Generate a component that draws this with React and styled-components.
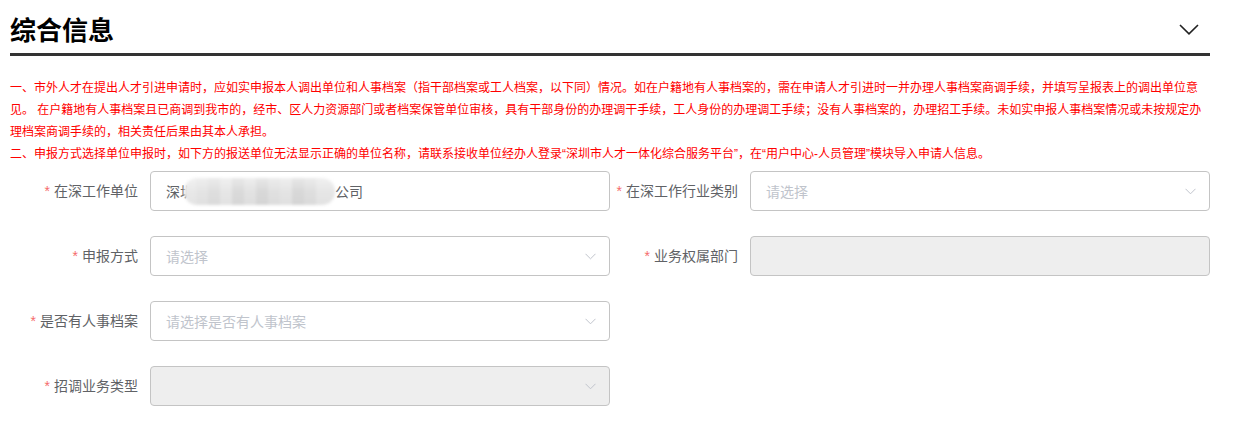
import React from "react";
import styled, { createGlobalStyle } from "styled-components";

const GlobalStyle = createGlobalStyle`
  html, body { margin: 0; padding: 0; background: #fff; }
  body { font-family: "Liberation Sans", "Noto Sans CJK SC", sans-serif; }
  * { box-sizing: border-box; }
`;

const Page = styled.div`
  width: 1200px;
  margin-left: 10px;
`;

const Header = styled.div`
  height: 56px;
  padding-top: 5px;
  display: flex;
  align-items: center;
  justify-content: space-between;
  border-bottom: 3px solid #333;
`;

const Title = styled.h2`
  margin: 0;
  font-family: "Noto Sans CJK SC", sans-serif;
  font-size: 26px;
  line-height: 36px;
  font-weight: 700;
  color: #000;
`;

const Toggle = styled.button`
  border: 0;
  background: none;
  padding: 0;
  margin-right: 11px;
  width: 20px;
  height: 12px;
  display: flex;
  align-items: center;
  justify-content: center;
  cursor: pointer;
`;

const Notice = styled.div`
  margin-top: 21px;
  width: 1200px;
  color: #f00;
  font-size: 12px;
  line-height: 22px;
`;

const NoticePara = styled.p`
  margin: 0;
`;

const Form = styled.div`
  margin-top: 6px;
  display: grid;
  grid-template-columns: 600px 600px;
  row-gap: 25px;
`;

const Item = styled.div`
  display: flex;
  align-items: center;
  height: 40px;
`;

const Label = styled.label`
  width: 140px;
  padding-right: 12px;
  text-align: right;
  font-size: 14px;
  line-height: 40px;
  color: #606266;
  white-space: nowrap;
`;

const Star = styled.span`
  color: #f56c6c;
  margin-right: 4px;
`;

const Field = styled.div`
  flex: 1;
  height: 40px;
  border: 1px solid #c4c4c4;
  border-radius: 4px;
  background: ${(p) => (p.$disabled ? "#eeeeee" : "#fff")};
  display: flex;
  align-items: center;
  padding: 0 13px 0 15px;
  font-size: 14px;
  color: #606266;
`;

const Value = styled.div`
  flex: 1;
  display: flex;
  align-items: center;
  white-space: nowrap;
`;

const Placeholder = styled.span`
  flex: 1;
  color: #c0c4cc;
`;

const Mosaic = styled.span`
  display: inline-block;
  width: 151px;
  height: 27px;
  margin-left: -10px;
  border-radius: 13px;
  filter: blur(1.5px);
  background:
    linear-gradient(180deg, rgba(255,255,255,0.4) 0%, rgba(255,255,255,0) 50%, rgba(0,0,0,0.02) 100%),
    linear-gradient(90deg,
      #e8e8e8 0 12px, #e4e4e4 12px 24px, #dedede 24px 36px, #e6e6e6 36px 48px,
      #dadada 48px 60px, #e2e2e2 60px 72px, #d8d8d8 72px 84px, #e0e0e0 84px 96px,
      #e4e4e4 96px 108px, #d8d8d8 108px 120px, #dedede 120px 132px, #e6e6e6 132px 151px);
`;

const Arrow = () => (
  <svg width="11" height="7" viewBox="0 0 11 7" aria-hidden="true">
    <polyline points="0.5,0.8 5.5,5.8 10.5,0.8" fill="none" stroke="#c0c4cc" strokeWidth="1" />
  </svg>
);

const FormItem = ({ label, children }) => (
  <Item>
    <Label>
      <Star>*</Star>
      {label}
    </Label>
    {children}
  </Item>
);

export default function App() {
  return (
    <Page>
      <GlobalStyle />
      <Header>
        <Title>综合信息</Title>
        <Toggle aria-label="收起">
          <svg width="20" height="11" viewBox="0 0 20 11">
            <polyline points="1,1 10,9.8 19,1" fill="none" stroke="#222" strokeWidth="1.6" />
          </svg>
        </Toggle>
      </Header>
      <Notice>
        <NoticePara>
          一、市外人才在提出人才引进申请时，应如实申报本人调出单位和人事档案（指干部档案或工人档案，以下同）情况。如在户籍地有人事档案的，需在申请人才引进时一并办理人事档案商调手续，并填写呈报表上的调出单位意见。 在户籍地有人事档案且已商调到我市的，经市、区人力资源部门或者档案保管单位审核，具有干部身份的办理调干手续，工人身份的办理调工手续；没有人事档案的，办理招工手续。未如实申报人事档案情况或未按规定办理档案商调手续的，相关责任后果由其本人承担。
        </NoticePara>
        <NoticePara>
          二、申报方式选择单位申报时，如下方的报送单位无法显示正确的单位名称，请联系接收单位经办人登录“深圳市人才一体化综合服务平台”，在“用户中心-人员管理”模块导入申请人信息。
        </NoticePara>
      </Notice>
      <Form>
        <FormItem label="在深工作单位">
          <Field>
            <Value>
              深圳
              <Mosaic />
              公司
            </Value>
          </Field>
        </FormItem>
        <FormItem label="在深工作行业类别">
          <Field>
            <Placeholder>请选择</Placeholder>
            <Arrow />
          </Field>
        </FormItem>
        <FormItem label="申报方式">
          <Field>
            <Placeholder>请选择</Placeholder>
            <Arrow />
          </Field>
        </FormItem>
        <FormItem label="业务权属部门">
          <Field $disabled />
        </FormItem>
        <FormItem label="是否有人事档案">
          <Field>
            <Placeholder>请选择是否有人事档案</Placeholder>
            <Arrow />
          </Field>
        </FormItem>
        <div />
        <FormItem label="招调业务类型">
          <Field $disabled>
            <Placeholder />
            <Arrow />
          </Field>
        </FormItem>
      </Form>
    </Page>
  );
}
